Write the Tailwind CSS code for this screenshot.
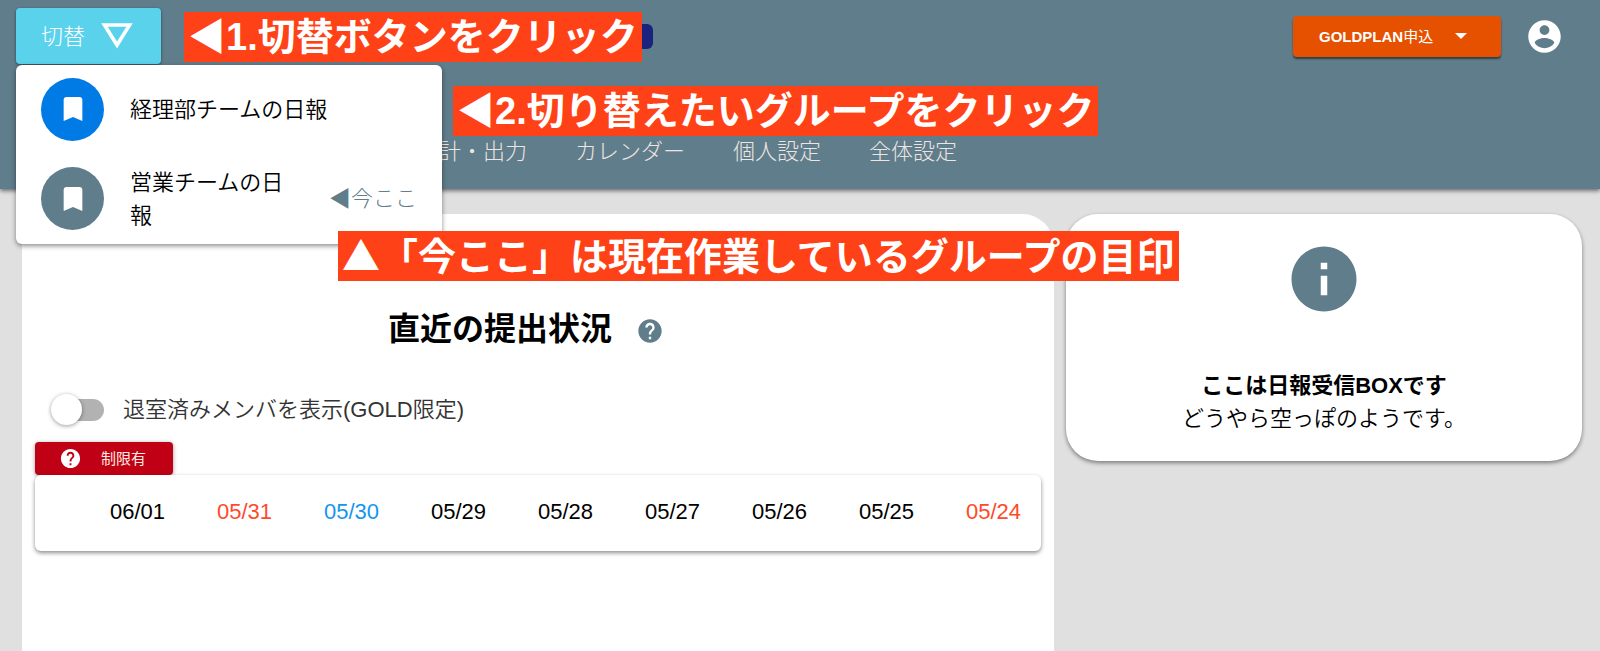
<!DOCTYPE html>
<html lang="ja">
<head>
<meta charset="utf-8">
<meta name="viewport" content="width=device-width, initial-scale=1">
<title>日報</title>
<script src="https://cdn.jsdelivr.net/npm/@tailwindcss/browser@4"></script>
</head>
<body class="relative flex min-h-screen flex-col overflow-x-hidden bg-[#e0e0e0] font-['Liberation_Sans','Noto_Sans_CJK_JP',sans-serif] text-[22px] leading-[33px] text-black">

<header class="flex flex-col bg-[#607d8b] pb-[21px] shadow-[0_2px_4px_rgba(0,0,0,0.5)]">
  <div class="flex items-center pt-2 pr-9 pl-4">
    <button type="button" aria-expanded="true" class="flex h-14 w-[145px] items-center gap-4 rounded-sm bg-[#5ad2ec] pl-[25px] font-light text-white shadow-[0_1px_3px_rgba(0,0,0,0.5)]">
      切替
      <svg class="h-[26px] w-8" viewBox="0 0 32 26" aria-hidden="true"><path d="M3.500 2H28.500L16 22Z" fill="none" stroke="#fff" stroke-width="3.600"/></svg>
    </button>
    <span class="ml-[452px] h-[25px] w-10 rounded-md bg-[#1a237e]"></span>
    <button type="button" class="ml-auto flex h-[41px] w-[208px] items-center rounded bg-[#e65100] pl-[26px] text-[15px] font-bold text-white shadow-[0_2px_2px_rgba(0,0,0,0.5)]">
      GOLDPLAN<span class="font-normal">申込</span>
      <svg class="ml-[22px] h-[6px] w-3" viewBox="0 0 12 6" aria-hidden="true"><path d="M0 0H12L6 6Z" fill="#fff"/></svg>
    </button>
    <button type="button" aria-label="アカウント" class="ml-6">
      <svg class="size-[39px]" viewBox="0 0 24 24" aria-hidden="true"><path fill="#fff" d="M12 2C6.480 2 2 6.480 2 12s4.480 10 10 10 10-4.480 10-10S17.520 2 12 2zm0 3c1.660 0 3 1.340 3 3s-1.340 3-3 3-3-1.340-3-3 1.340-3 3-3zm0 14.200c-2.500 0-4.710-1.280-6-3.220.030-1.990 4-3.080 6-3.080 1.990 0 5.970 1.090 6 3.080-1.290 1.940-3.500 3.220-6 3.220z"/></svg>
    </button>
  </div>
  <nav class="mt-[71px] flex gap-12 pl-[417px] font-light text-[#eee5e1]">
    <a href="#">集計・出力</a>
    <a href="#">カレンダー</a>
    <a href="#">個人設定</a>
    <a href="#">全体設定</a>
  </nav>
</header>

<main class="grid flex-1 grid-cols-[2fr_1fr] items-start gap-3 pt-[25px] pr-[18px] pl-[22px]">
  <section class="flex min-w-0 flex-col self-stretch rounded-tr-[32px] bg-white px-[13px] pt-[95px]">
    <div class="flex items-center justify-center gap-6 pr-6">
      <h1 class="text-[32px] leading-10 font-bold">直近の提出状況</h1>
      <button type="button" aria-label="ヘルプ">
        <svg class="mt-1 size-[28px]" viewBox="0 0 24 24" aria-hidden="true"><path fill="#607d8b" d="M12 2C6.480 2 2 6.480 2 12s4.480 10 10 10 10-4.480 10-10S17.520 2 12 2zm1 17h-2v-2h2v2zm2.070-7.750l-.9.920C13.450 12.900 13 13.500 13 15h-2v-.5c0-1.100.450-2.100 1.170-2.830l1.240-1.260c.370-.360.590-.860.590-1.410 0-1.100-.9-2-2-2s-2 .9-2 2H8c0-2.210 1.790-4 4-4s4 1.790 4 4c0 .880-.360 1.680-.930 2.250z"/></svg>
      </button>
    </div>
    <label class="mt-11 flex items-center gap-[19px] self-start pl-4 font-[350] text-[#333]">
      <span class="relative flex h-[33px] w-[53px] items-center">
        <input type="checkbox" role="switch" class="peer sr-only">
        <span class="ml-3 h-[22px] w-full rounded-full bg-[#b2b2b2]"></span>
        <span class="absolute left-0 size-[31px] rounded-full bg-white shadow-[0_1px_4px_rgba(0,0,0,0.4)]"></span>
      </span>
      退室済みメンバを表示(GOLD限定)
    </label>
    <button type="button" class="mt-4 flex h-[33px] w-[138px] items-center gap-[19px] self-start rounded-sm bg-[#c00014] pl-6 text-[15px] text-[#ffe9e0] shadow-[0_1px_4px_rgba(0,0,0,0.4)]">
      <svg class="size-[23px]" viewBox="0 0 24 24" aria-hidden="true"><path fill="#fff" d="M12 2C6.480 2 2 6.480 2 12s4.480 10 10 10 10-4.480 10-10S17.520 2 12 2zm1 17h-2v-2h2v2zm2.070-7.750l-.9.920C13.450 12.900 13 13.500 13 15h-2v-.5c0-1.100.450-2.100 1.170-2.830l1.240-1.260c.370-.360.590-.860.590-1.410 0-1.100-.9-2-2-2s-2 .9-2 2H8c0-2.210 1.790-4 4-4s4 1.790 4 4c0 .880-.360 1.680-.930 2.250z"/></svg>
      制限有
    </button>
    <div class="rounded-md bg-white shadow-[0_2px_4px_rgba(0,0,0,0.45)]">
      <table class="h-[76px] w-full table-fixed text-right">
        <thead>
          <tr>
            <td class="w-[44px]"></td>
            <th scope="col" class="w-[107px] pr-[21px] pb-1 font-normal">06/01</th>
            <th scope="col" class="w-[107px] pr-[21px] pb-1 font-normal text-[#ff4a2a]">05/31</th>
            <th scope="col" class="w-[107px] pr-[21px] pb-1 font-normal text-[#1496ee]">05/30</th>
            <th scope="col" class="w-[107px] pr-[21px] pb-1 font-normal">05/29</th>
            <th scope="col" class="w-[107px] pr-[21px] pb-1 font-normal">05/28</th>
            <th scope="col" class="w-[107px] pr-[21px] pb-1 font-normal">05/27</th>
            <th scope="col" class="w-[107px] pr-[21px] pb-1 font-normal">05/26</th>
            <th scope="col" class="w-[107px] pr-[21px] pb-1 font-normal">05/25</th>
            <th scope="col" class="w-[107px] pr-[21px] pb-1 font-normal text-[#ff4a2a]">05/24</th>
          </tr>
        </thead>
      </table>
    </div>
  </section>

  <aside class="flex min-w-0 flex-col items-center rounded-[32px] bg-white pt-[26px] pb-[26px] text-center shadow-[0_2px_4px_rgba(0,0,0,0.45)]">
    <svg class="size-[78px]" viewBox="0 0 24 24" aria-hidden="true"><path fill="#607d8b" d="M12 2C6.480 2 2 6.480 2 12s4.480 10 10 10 10-4.480 10-10S17.520 2 12 2zm1 15h-2v-6h2v6zm0-8h-2V7h2v2z"/></svg>
    <p class="mt-[51px] font-bold">ここは日報受信BOXです</p>
    <p class="font-[350]">どうやら空っぽのようです。</p>
  </aside>
</main>

<!-- group switcher menu -->
<ul class="absolute top-[65px] left-4 flex w-[426px] flex-col rounded-md bg-white font-[350] shadow-[0_2px_5px_rgba(0,0,0,0.45)]">
  <li>
    <button type="button" class="flex h-[88px] w-full items-center gap-[26px] px-[25px] text-left">
      <span class="flex size-[63px] shrink-0 items-center justify-center rounded-full bg-[#007be6]">
        <svg class="size-8" viewBox="0 0 24 24" aria-hidden="true"><path fill="#fff" d="M17 3H7c-1.100 0-2 .9-2 2v16l7-3 7 3V5c0-1.100-.9-2-2-2z"/></svg>
      </span>
      経理部チームの日報
    </button>
  </li>
  <li>
    <button type="button" class="flex h-[91px] w-full items-center gap-[26px] px-[25px] text-left">
      <span class="flex size-[63px] shrink-0 items-center justify-center rounded-full bg-[#607d8b]">
        <svg class="size-8" viewBox="0 0 24 24" aria-hidden="true"><path fill="#fff" d="M17 3H7c-1.100 0-2 .9-2 2v16l7-3 7 3V5c0-1.100-.9-2-2-2z"/></svg>
      </span>
      <span class="flex-1">営業チームの日報</span>
      <span class="font-light whitespace-nowrap text-[#607d8b]">◀今ここ</span>
    </button>
  </li>
</ul>

<!-- guide captions -->
<p class="absolute top-[12px] left-[184px] bg-[#ff4117] px-1 text-[38px] leading-[50px] font-bold whitespace-nowrap text-white">◀1.切替ボタンをクリック</p>
<p class="absolute top-[86px] left-[453px] bg-[#ff4117] px-1 text-[38px] leading-[50px] font-bold whitespace-nowrap text-white">◀2.切り替えたいグループをクリック</p>
<p class="absolute top-[231px] left-[338px] bg-[#ff4117] px-1 pb-1 font-['Noto_Sans_CJK_JP',sans-serif] text-[38px] leading-[46px] font-bold whitespace-nowrap text-white">▲「今ここ」は現在作業しているグループの目印</p>

</body>
</html>
